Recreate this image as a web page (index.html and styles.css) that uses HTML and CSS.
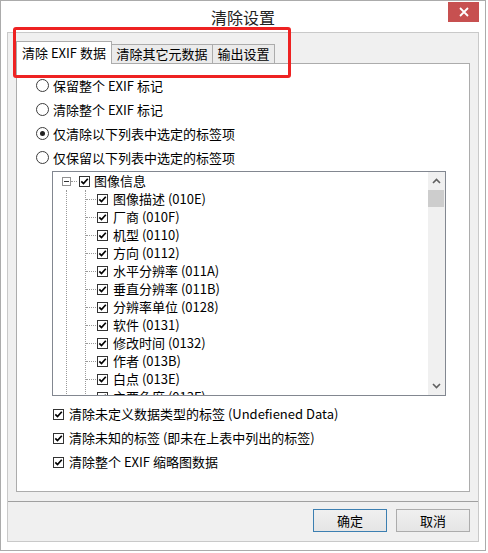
FILE: index.html
```html
<!DOCTYPE html>
<html lang="zh-CN">
<head>
<meta charset="utf-8">
<title>清除设置</title>
<link rel="stylesheet" href="styles.css">
</head>
<body>
<div class="window">
  <div class="titlebar">
    <span></span>
    <span class="title">清除设置</span>
    <div class="close"><svg width="10" height="10" viewBox="0 0 10 10"><path d="M1 1L9 9M9 1L1 9" stroke="#fff" stroke-width="1.8"/></svg></div>
  </div>
  <div class="client">
    <div class="tabs">
      <div class="tab active">清除 EXIF 数据</div>
      <div class="tab second">清除其它元数据</div>
      <div class="tab third">输出设置</div>
    </div>
    <div class="panel">
      <div class="options">
        <div class="opt"><span class="radio"></span>保留整个 EXIF 标记</div>
        <div class="opt"><span class="radio"></span>清除整个 EXIF 标记</div>
        <div class="opt"><span class="radio on"></span>仅清除以下列表中选定的标签项</div>
        <div class="opt"><span class="radio"></span>仅保留以下列表中选定的标签项</div>
      </div>
      <div class="tree">
        <div class="tree-body">
          <div class="root-row">
            <span class="expander"></span><span class="stub-short"></span>
            <svg class="cb" viewBox="0 0 11 11"><rect x="0.5" y="0.5" width="10" height="10" fill="#fff" stroke="#333"/><path d="M2.3 5.4L4.5 7.6L8.8 2.8" stroke="#000" stroke-width="1.7" fill="none"/></svg>
            <span class="label">图像信息</span>
          </div>
          <div class="root-line">
            <div class="child-list">
              <div class="leaf"><svg class="cb" viewBox="0 0 11 11"><rect x="0.5" y="0.5" width="10" height="10" fill="#fff" stroke="#333"/><path d="M2.3 5.4L4.5 7.6L8.8 2.8" stroke="#000" stroke-width="1.7" fill="none"/></svg><span class="label">图像描述 (010E)</span></div>
              <div class="leaf"><svg class="cb" viewBox="0 0 11 11"><rect x="0.5" y="0.5" width="10" height="10" fill="#fff" stroke="#333"/><path d="M2.3 5.4L4.5 7.6L8.8 2.8" stroke="#000" stroke-width="1.7" fill="none"/></svg><span class="label">厂商 (010F)</span></div>
              <div class="leaf"><svg class="cb" viewBox="0 0 11 11"><rect x="0.5" y="0.5" width="10" height="10" fill="#fff" stroke="#333"/><path d="M2.3 5.4L4.5 7.6L8.8 2.8" stroke="#000" stroke-width="1.7" fill="none"/></svg><span class="label">机型 (0110)</span></div>
              <div class="leaf"><svg class="cb" viewBox="0 0 11 11"><rect x="0.5" y="0.5" width="10" height="10" fill="#fff" stroke="#333"/><path d="M2.3 5.4L4.5 7.6L8.8 2.8" stroke="#000" stroke-width="1.7" fill="none"/></svg><span class="label">方向 (0112)</span></div>
              <div class="leaf"><svg class="cb" viewBox="0 0 11 11"><rect x="0.5" y="0.5" width="10" height="10" fill="#fff" stroke="#333"/><path d="M2.3 5.4L4.5 7.6L8.8 2.8" stroke="#000" stroke-width="1.7" fill="none"/></svg><span class="label">水平分辨率 (011A)</span></div>
              <div class="leaf"><svg class="cb" viewBox="0 0 11 11"><rect x="0.5" y="0.5" width="10" height="10" fill="#fff" stroke="#333"/><path d="M2.3 5.4L4.5 7.6L8.8 2.8" stroke="#000" stroke-width="1.7" fill="none"/></svg><span class="label">垂直分辨率 (011B)</span></div>
              <div class="leaf"><svg class="cb" viewBox="0 0 11 11"><rect x="0.5" y="0.5" width="10" height="10" fill="#fff" stroke="#333"/><path d="M2.3 5.4L4.5 7.6L8.8 2.8" stroke="#000" stroke-width="1.7" fill="none"/></svg><span class="label">分辨率单位 (0128)</span></div>
              <div class="leaf"><svg class="cb" viewBox="0 0 11 11"><rect x="0.5" y="0.5" width="10" height="10" fill="#fff" stroke="#333"/><path d="M2.3 5.4L4.5 7.6L8.8 2.8" stroke="#000" stroke-width="1.7" fill="none"/></svg><span class="label">软件 (0131)</span></div>
              <div class="leaf"><svg class="cb" viewBox="0 0 11 11"><rect x="0.5" y="0.5" width="10" height="10" fill="#fff" stroke="#333"/><path d="M2.3 5.4L4.5 7.6L8.8 2.8" stroke="#000" stroke-width="1.7" fill="none"/></svg><span class="label">修改时间 (0132)</span></div>
              <div class="leaf"><svg class="cb" viewBox="0 0 11 11"><rect x="0.5" y="0.5" width="10" height="10" fill="#fff" stroke="#333"/><path d="M2.3 5.4L4.5 7.6L8.8 2.8" stroke="#000" stroke-width="1.7" fill="none"/></svg><span class="label">作者 (013B)</span></div>
              <div class="leaf"><svg class="cb" viewBox="0 0 11 11"><rect x="0.5" y="0.5" width="10" height="10" fill="#fff" stroke="#333"/><path d="M2.3 5.4L4.5 7.6L8.8 2.8" stroke="#000" stroke-width="1.7" fill="none"/></svg><span class="label">白点 (013E)</span></div>
              <div class="leaf"><svg class="cb" viewBox="0 0 11 11"><rect x="0.5" y="0.5" width="10" height="10" fill="#fff" stroke="#333"/><path d="M2.3 5.4L4.5 7.6L8.8 2.8" stroke="#000" stroke-width="1.7" fill="none"/></svg><span class="label">主要色度 (013F)</span></div>
            </div>
          </div>
        </div>
        <div class="scrollbar">
          <div class="arrow"><svg width="9" height="6" viewBox="0 0 9 6"><path d="M1 5L4.5 1.5L8 5" stroke="#606060" stroke-width="1.6" fill="none"/></svg></div>
          <div class="thumb"></div>
          <div class="track"></div>
          <div class="arrow"><svg width="9" height="6" viewBox="0 0 9 6"><path d="M1 1L4.5 4.5L8 1" stroke="#606060" stroke-width="1.6" fill="none"/></svg></div>
        </div>
      </div>
      <div class="checks">
        <div class="check"><svg class="cb" viewBox="0 0 11 11"><rect x="0.5" y="0.5" width="10" height="10" fill="#fff" stroke="#333"/><path d="M2.3 5.4L4.5 7.6L8.8 2.8" stroke="#000" stroke-width="1.7" fill="none"/></svg><span class="label">清除未定义数据类型的标签 (Undefiened Data)</span></div>
        <div class="check"><svg class="cb" viewBox="0 0 11 11"><rect x="0.5" y="0.5" width="10" height="10" fill="#fff" stroke="#333"/><path d="M2.3 5.4L4.5 7.6L8.8 2.8" stroke="#000" stroke-width="1.7" fill="none"/></svg><span class="label">清除未知的标签 (即未在上表中列出的标签)</span></div>
        <div class="check"><svg class="cb" viewBox="0 0 11 11"><rect x="0.5" y="0.5" width="10" height="10" fill="#fff" stroke="#333"/><path d="M2.3 5.4L4.5 7.6L8.8 2.8" stroke="#000" stroke-width="1.7" fill="none"/></svg><span class="label">清除整个 EXIF 缩略图数据</span></div>
      </div>
    </div>
    <div class="footer">
      <div class="btn default">确定</div>
      <div class="btn">取消</div>
    </div>
  </div>
  <div class="annot"></div>
</div>
</body>
</html>
```

FILE: styles.css
```css
* { box-sizing: border-box; }
html, body { margin: 0; padding: 0; background: #ffffff; }
body {
  font-family: "Noto Sans CJK SC", "Noto Sans", sans-serif;
  font-size: 13px;
  color: #000;
}
.window {
  position: relative;
  width: 486px;
  height: 551px;
  border: 1px solid #ababab;
  background: #ffffff;
  padding: 0 6px 8px 6px;
  display: flex;
  flex-direction: column;
}
.titlebar {
  height: 31px;
  display: grid;
  grid-template-columns: 1fr auto 1fr;
  align-items: start;
}
.title {
  font-size: 16px;
  line-height: 20px;
  padding-top: 6px;
  color: #222;
}
.close {
  justify-self: end;
  margin-top: 1px;
  width: 31px;
  height: 20px;
  background: #c75050;
  display: flex;
  align-items: center;
  justify-content: center;
}
.client {
  flex: 1;
  border: 1px solid #c9c9c9;
  background: #f0f0f0;
  padding: 8px 0 0 0;
  display: flex;
  flex-direction: column;
}
.tabs {
  height: 22px;
  margin: 0 8px;
  display: flex;
  align-items: flex-end;
}
.tab {
  height: 19px;
  border: 1px solid #acacac;
  border-bottom: none;
  background: #ebebeb;
  line-height: 17px;
  text-align: center;
  color: #000;
}
.tab.active {
  position: relative;
  z-index: 1;
  height: 23px;
  margin-bottom: -1px;
  width: 96px;
  background: #fff;
  line-height: 22px;
}
.tab.second { width: 101px; border-left: none; }
.tab.third { width: 62px; border-left: none; }
.panel {
  margin: 0 8px;
  border: 1px solid #acacac;
  background: #fff;
  padding: 9px 0 17px 0;
}
.options { padding-left: 19px; }
.opt {
  height: 24px;
  display: flex;
  align-items: center;
  gap: 4px;
}
.radio {
  width: 13px;
  height: 13px;
  border: 1px solid #3c3c3c;
  border-radius: 50%;
  background: #fff;
  display: flex;
  align-items: center;
  justify-content: center;
}
.radio.on::after {
  content: "";
  width: 5px;
  height: 5px;
  border-radius: 50%;
  background: #222;
}
.tree {
  margin: 2px 0 0 35px;
  width: 394px;
  height: 225px;
  border: 1px solid #828790;
  display: flex;
  background: #fff;
}
.tree-body {
  flex: 1;
  overflow: hidden;
  padding-left: 9px;
}
.root-row {
  height: 18px;
  display: flex;
  align-items: center;
}
.expander {
  width: 9px;
  height: 9px;
  border: 1px solid #919191;
  background: #fff;
  display: flex;
  align-items: center;
  justify-content: center;
}
.expander::after {
  content: "";
  width: 5px;
  height: 1px;
  background: #333;
}
.stub-short {
  width: 6px;
  border-top: 1px dotted #9a9a9a;
  margin-right: 2px;
}
.cb { width: 11px; height: 11px; flex: none; }
.label { margin-left: 5px; white-space: nowrap; line-height: 18px; }
.root-row .label { margin-left: 4px; }
.root-line {
  margin-left: 4px;
  border-left: 1px dotted #9a9a9a;
}
.child-list {
  margin-left: 18px;
  border-left: 1px dotted #9a9a9a;
}
.leaf {
  height: 18px;
  display: flex;
  align-items: center;
}
.leaf::before {
  content: "";
  width: 10px;
  border-top: 1px dotted #9a9a9a;
  margin-right: 1px;
}
.scrollbar {
  width: 17px;
  background: #f0f0f0;
  display: flex;
  flex-direction: column;
}
.arrow {
  height: 18px;
  display: flex;
  align-items: center;
  justify-content: center;
}
.thumb {
  height: 17px;
  margin-right: 1px;
  background: #cdcdcd;
}
.track { flex: 1; }
.checks {
  margin-top: 6px;
  padding-left: 36px;
}
.check {
  height: 24px;
  display: flex;
  align-items: center;
}
.footer {
  margin-top: 9px;
  border-top: 1px solid #a0a0a0;
  padding: 7px 8px 0 0;
  display: flex;
  justify-content: flex-end;
  gap: 9px;
}
.btn {
  width: 74px;
  height: 23px;
  border: 1px solid #acacac;
  background: linear-gradient(#f0f0f0, #e5e5e5);
  text-align: center;
  line-height: 21px;
  color: #000;
}
.btn.default {
  border-color: #3c7fb1;
}
.annot {
  position: absolute;
  left: 12px;
  top: 26px;
  width: 278px;
  height: 51px;
  border: 3px solid #ee2222;
  border-radius: 3px;
}
```
